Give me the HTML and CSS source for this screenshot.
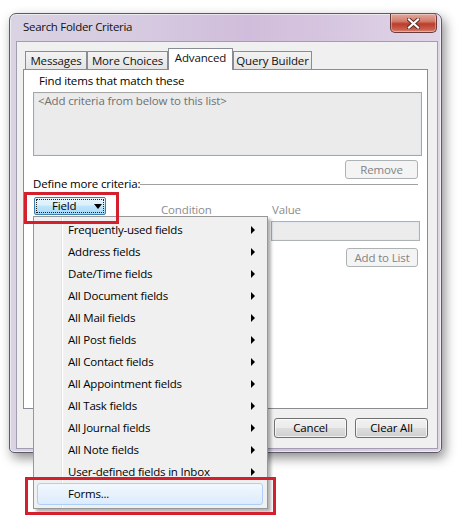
FILE: index.html
```html
<!DOCTYPE html>
<html>
<head>
<meta charset="utf-8">
<link rel="stylesheet" href="styles.css">
</head>
<body>
<div class="screen">
  <div class="window">
    <div class="titlebar">
      <span class="title">Search Folder Criteria</span>
      <div class="close">
        <svg width="13" height="11" viewBox="0 0 13 11"><path d="M2 1.5 L11 9.5 M11 1.5 L2 9.5" stroke="#5b2a25" stroke-width="4" stroke-linecap="square"/><path d="M2 1.5 L11 9.5 M11 1.5 L2 9.5" stroke="#ffffff" stroke-width="2.2" stroke-linecap="square"/></svg>
      </div>
    </div>
    <div class="client">
      <div class="tabs">
        <div class="tab t-msg">Messages</div>
        <div class="tab t-more">More Choices</div>
        <div class="tab t-adv active">Advanced</div>
        <div class="tab t-qb">Query Builder</div>
      </div>
      <div class="panel">
        <div class="find-label">Find items that match these</div>
        <div class="listbox">&lt;Add criteria from below to this list&gt;</div>
        <div class="btn disabled remove">Remove</div>
        <div class="group-title"><span>Define more criteria:</span><span class="rule"></span></div>
        <div class="criteria">
          <div class="col-field">
            <div class="field-btn"><div class="focus"><span class="field-text">Field</span><span class="caret"></span></div></div>
          </div>
          <div class="col-cond"><span class="dim">Condition</span></div>
          <div class="col-value">
            <span class="dim">Value</span>
            <div class="input"></div>
            <div class="btn disabled add">Add to List</div>
          </div>
        </div>
      </div>
      <div class="buttons">
        <div class="btn">Cancel</div>
        <div class="btn">Clear All</div>
      </div>
    </div>
  </div>

  <div class="menu">
    <div class="item"><span>Frequently-used fields</span><span class="arrow"></span></div>
    <div class="item"><span>Address fields</span><span class="arrow"></span></div>
    <div class="item"><span>Date/Time fields</span><span class="arrow"></span></div>
    <div class="item"><span>All Document fields</span><span class="arrow"></span></div>
    <div class="item"><span>All Mail fields</span><span class="arrow"></span></div>
    <div class="item"><span>All Post fields</span><span class="arrow"></span></div>
    <div class="item"><span>All Contact fields</span><span class="arrow"></span></div>
    <div class="item"><span>All Appointment fields</span><span class="arrow"></span></div>
    <div class="item"><span>All Task fields</span><span class="arrow"></span></div>
    <div class="item"><span>All Journal fields</span><span class="arrow"></span></div>
    <div class="item"><span>All Note fields</span><span class="arrow"></span></div>
    <div class="item"><span>User-defined fields in Inbox</span><span class="arrow"></span></div>
    <div class="item selected"><span>Forms...</span></div>
  </div>

  <div class="hl hl-field"></div>
  <div class="hl hl-forms"></div>
</div>
</body>
</html>
```
FILE: styles.css
```css
* { box-sizing: border-box; }

html, body {
  margin: 0;
  padding: 0;
  background: #ffffff;
}

body {
  font-family: "Open Sans", "Noto Sans", sans-serif;
  font-size: 11.5px;
  letter-spacing: -0.15px;
  color: #000;
}

.screen {
  position: relative;
  width: 461px;
  height: 525px;
  overflow: hidden;
}

.window {
  margin: 13px 0 0 9px;
  width: 433px;
  height: 440px;
  border: 1px solid #5d5a68;
  border-radius: 7px 7px 5px 5px;
  padding: 0 3px 3px 6px;
  background: linear-gradient(90deg, #d9d3e2 0%, #d6cae1 30%, #d0bddb 55%, #d7c6e0 75%, #e0d6e8 100%);
  box-shadow: 3px 5px 12px rgba(0, 0, 0, 0.45), inset 0 0 0 1px rgba(255, 255, 255, 0.55);
}

.titlebar {
  height: 27px;
  display: flex;
  align-items: flex-start;
}

.title {
  margin: 5px 0 0 7px;
  line-height: 16px;
  font-size: 11.5px;
  letter-spacing: -0.3px;
  color: #111;
}

.close {
  margin-left: auto;
  margin-right: 1px;
  width: 47px;
  height: 19px;
  border: 1px solid #6a3a38;
  border-top: none;
  border-radius: 0 3px 5px 5px;
  background: linear-gradient(#e2a89c 0%, #d27d6d 40%, #bd3c2a 55%, #c95f4d 85%, #dc8a7a 100%);
  display: flex;
  align-items: center;
  justify-content: center;
  box-shadow: inset 0 0 0 1px rgba(255, 255, 255, 0.35);
}

.client {
  width: 422px;
  height: 408px;
  border: 1px solid #a29eaf;
  background: #f0f0f0;
  padding: 6px 0 0 6px;
}

.tabs {
  display: flex;
  align-items: flex-end;
  height: 22px;
  padding-left: 2px;
  margin-bottom: -1px;
  position: relative;
  z-index: 1;
}

.tab {
  height: 18px;
  margin-bottom: 1px;
  border: 1px solid #898c95;
  border-bottom: none;
  background: linear-gradient(#f3f3f3, #e4e4e4);
  text-align: center;
  line-height: 17px;
  color: #111;
}

.t-msg { width: 62px; }
.t-more { width: 81px; }
.t-adv { width: 65px; }
.t-qb { width: 79px; }

.tab.active {
  height: 22px;
  margin-bottom: 0;
  background: #ffffff;
  line-height: 18px;
}

.panel {
  width: 405px;
  height: 340px;
  border: 1px solid #898c95;
  background: #ffffff;
  padding-left: 9px;
}

.find-label {
  margin: 3px 0 0 6px;
  line-height: 16px;
}

.listbox {
  margin-top: 3px;
  width: 389px;
  height: 64px;
  border: 1px solid #a6a6a6;
  background: #ebebeb;
  box-shadow: inset 0 0 0 1px #e2e7ec;
  padding: 0 0 0 4px;
  line-height: 16px;
  color: #707070;
}

.btn {
  width: 73px;
  height: 20px;
  border: 1px solid #707070;
  border-radius: 3px;
  background: linear-gradient(#f2f2f2 0%, #ebebeb 48%, #dddddd 52%, #cfcfcf 100%);
  box-shadow: inset 0 0 0 1px rgba(255, 255, 255, 0.7);
  text-align: center;
  line-height: 17px;
  color: #000;
}

.btn.disabled {
  border-color: #adb2b5;
  background: #f4f4f4;
  box-shadow: none;
  color: #838383;
}

.remove {
  margin: 4px 0 0 312px;
  height: 19px;
  width: 73px;
}

.group-title {
  display: flex;
  align-items: center;
  height: 14px;
  margin-top: -2px;
  line-height: 14px;
}

.rule {
  width: 278px;
  height: 2px;
  margin-top: 2px;
  border-top: 1px solid #a0a0a0;
  border-bottom: 1px solid #ffffff;
}

.criteria {
  display: flex;
  align-items: flex-start;
}

.col-field {
  margin: 6px 0 0 1px;
}

.field-btn {
  width: 72px;
  height: 18px;
  border: 1px solid #3c7fb1;
  border-radius: 2px;
  background: linear-gradient(#eaf6fd 0%, #d9f0fc 45%, #bee6fd 50%, #a7d9f5 100%);
  padding: 1px;
}

.focus {
  height: 100%;
  border: 1px dotted #202020;
  display: flex;
  align-items: center;
  padding-left: 15px;
  line-height: 12px;
}

.field-text {
  flex: none;
}

.caret {
  margin-left: 17px;
  width: 0;
  height: 0;
  border-left: 4px solid transparent;
  border-right: 4px solid transparent;
  border-top: 5px solid #000;
}

.col-cond {
  width: 110px;
  margin: 11px 0 0 55px;
  line-height: 16px;
}

.dim {
  color: #8d8d8d;
  line-height: 16px;
}

.col-value {
  margin: 11px 0 0 0;
  display: flex;
  flex-direction: column;
}

.col-value .dim {
  padding-left: 1px;
}

.input {
  margin-top: 3px;
  width: 149px;
  height: 20px;
  border: 1px solid #adb2b5;
  background: #ececec;
  box-shadow: inset 0 0 0 1px #e2e8ee;
}

.add {
  margin: 7px 0 0 75px;
  width: 72px;
  height: 19px;
}

.buttons {
  width: 405px;
  margin-top: 9px;
  display: flex;
  justify-content: flex-end;
  gap: 8px;
}

/* popup menu overlay */
.menu {
  position: absolute;
  left: 33px;
  top: 216px;
  width: 235px;
  height: 293px;
  border: 1px solid #979797;
  padding: 2px;
  background:
    linear-gradient(90deg, transparent 27px, #e2e3e3 27px, #e2e3e3 28px, #ffffff 28px, #ffffff 29px, transparent 29px),
    #f0f0f0;
  box-shadow: 3px 3px 3px rgba(0, 0, 0, 0.3);
  z-index: 5;
}

.item {
  height: 22px;
  display: flex;
  align-items: center;
  justify-content: space-between;
  padding: 0 10px 0 32px;
  line-height: 16px;
  font-size: 11.5px;
  letter-spacing: -0.2px;
}

.arrow {
  width: 0;
  height: 0;
  border-top: 4px solid transparent;
  border-bottom: 4px solid transparent;
  border-left: 4px solid #000;
}

.item.selected {
  margin: 0 2px 0 1px;
  padding-left: 30px;
  border: 1px solid #aecff7;
  border-radius: 3px;
  background: linear-gradient(#f2f8fe, #dcebfc);
}

.hl {
  position: absolute;
  border: 3px solid #d4202c;
  z-index: 6;
}

.hl-field {
  left: 24px;
  top: 192px;
  width: 95px;
  height: 32px;
}

.hl-forms {
  left: 25px;
  top: 477px;
  width: 251px;
  height: 38px;
}
```
